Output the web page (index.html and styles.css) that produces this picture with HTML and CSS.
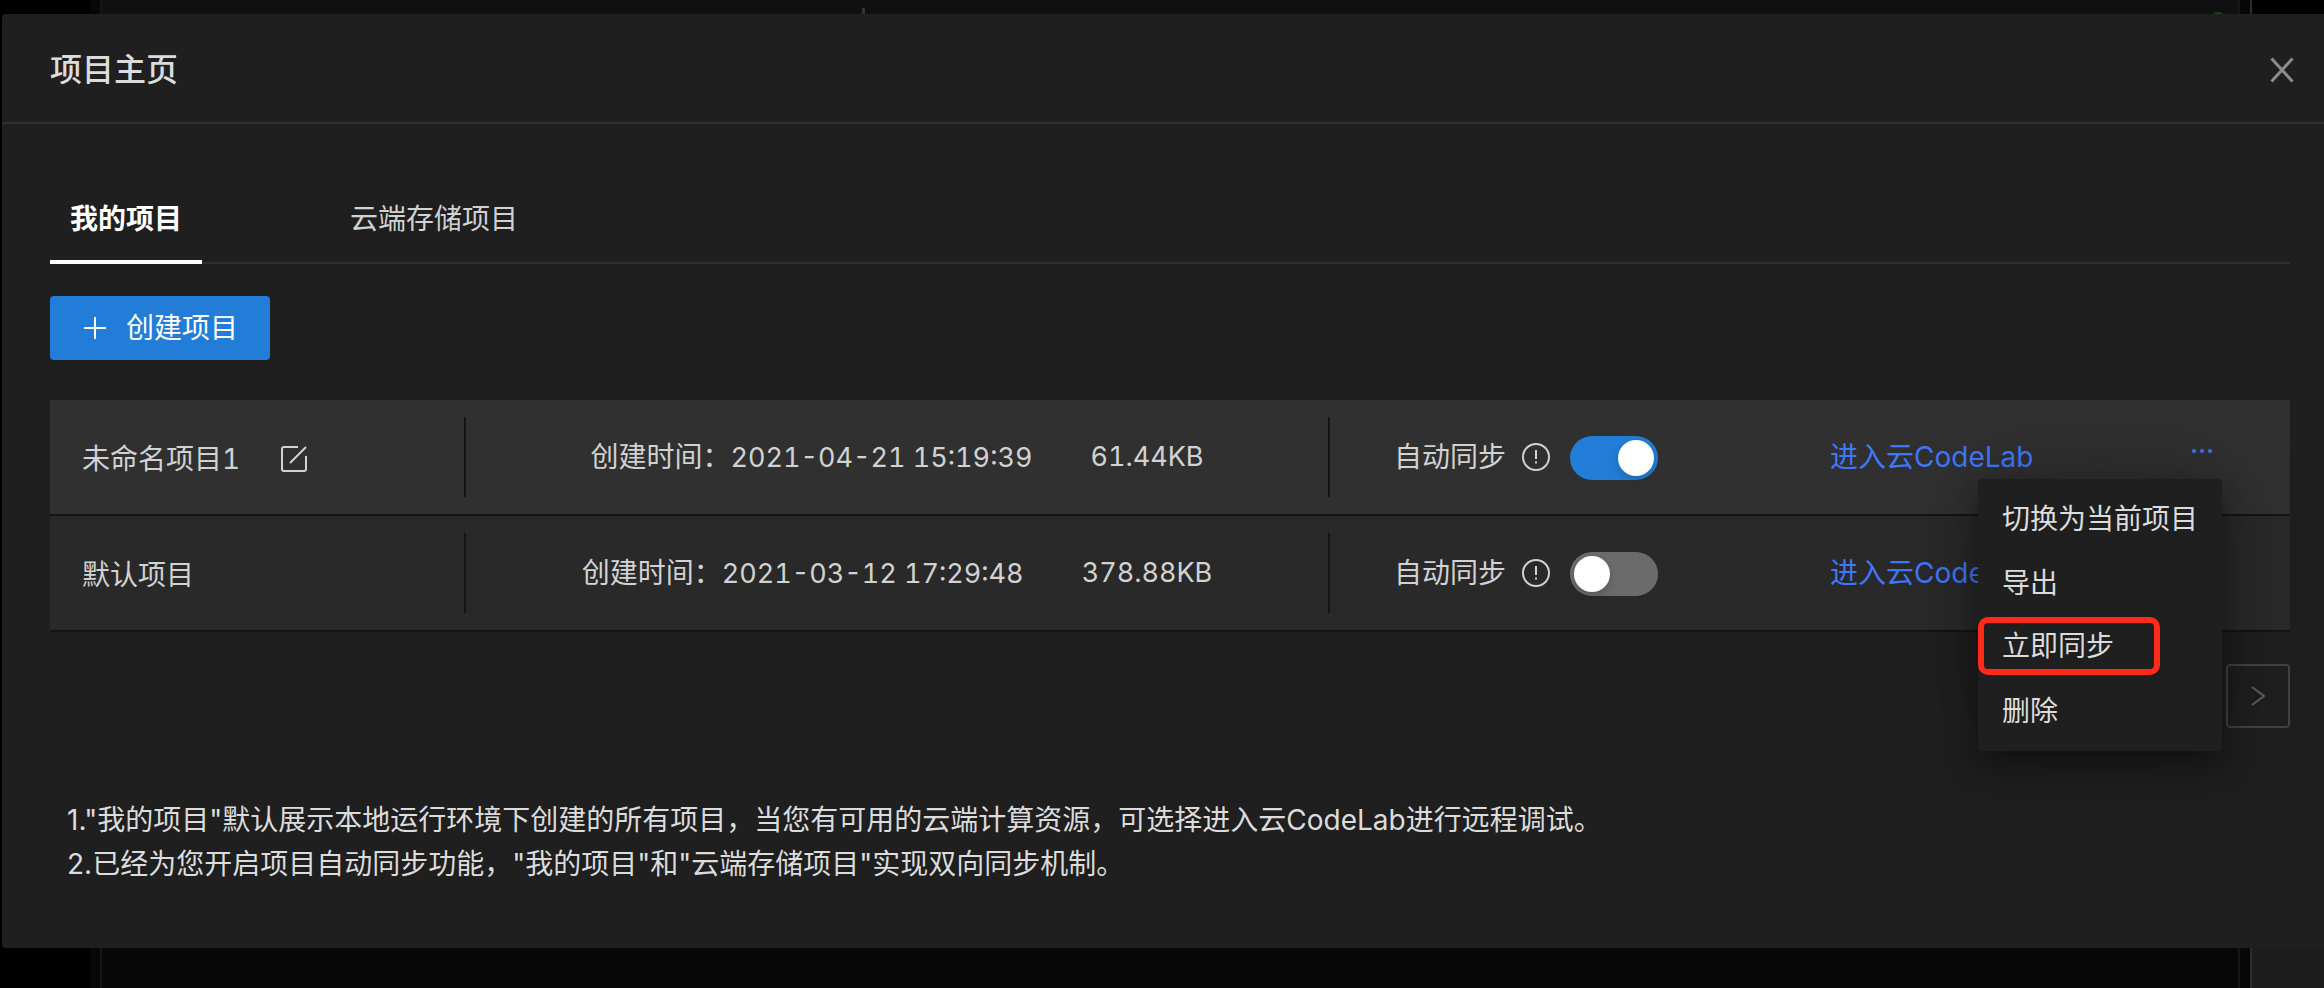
FILE: index.html
```html
<!DOCTYPE html>
<html lang="zh-CN">
<head>
  <meta charset="UTF-8" />
  <meta name="viewport" content="width=device-width, initial-scale=1.0" />
  <title>项目主页</title>
  <link rel="stylesheet" href="styles.css">
</head>
<body>
  <!-- dimmed editor behind the dialog -->
  <div class="backdrop" aria-hidden="true">
    <div class="side"></div>
    <div class="gutter"></div>
    <div class="editor"><span class="cursor"></span><span class="status"></span></div>
    <div class="gutter"></div>
    <div class="panel"></div>
  </div>

  <main class="modal" role="dialog" aria-labelledby="title">
    <header class="modal-header">
      <h1 id="title">项目主页</h1>
      <button class="close" aria-label="关闭">
        <svg width="24" height="26" viewBox="0 0 24 26"><path d="M1.500 1.500L22.500 24.500M22.500 1.500L1.500 24.500"/></svg>
      </button>
    </header>

    <div class="modal-body">
      <nav class="tabs">
        <a href="#mine" class="tab active">我的项目</a>
        <a href="#cloud" class="tab">云端存储项目</a>
      </nav>

      <button class="create">
        <svg width="22" height="22" viewBox="0 0 22 22"><path d="M11 0V22M0 11H22"/></svg>
        创建项目
      </button>

      <div class="list">
        <div class="row current">
          <div class="name">未命名项目1
            <button class="edit" aria-label="重命名">
              <svg width="28" height="28" viewBox="0 0 28 28"><path d="M18 2H4Q2 2 2 4V24Q2 26 4 26H24Q26 26 26 24V11M26 2L10 18"/></svg>
            </button>
          </div>
          <div class="info"><span>创建时间：<time>2021-04-21 15:19:39</time></span><span class="size">61.44KB</span></div>
          <div class="sync">
            <label for="sync1">自动同步</label>
            <svg class="tip" width="28" height="28" viewBox="0 0 28 28"><circle cx="14" cy="14" r="13"/><path d="M14 7V16M14 18.500V20.500"/></svg>
            <input type="checkbox" class="switch" id="sync1" checked>
          </div>
          <div class="actions">
            <a href="#codelab">进入云CodeLab</a>
            <div class="more">
              <button class="dots" aria-label="更多">
                <svg width="20" height="4" viewBox="0 0 20 4"><circle cx="2" cy="2" r="2"/><circle cx="10" cy="2" r="2"/><circle cx="18" cy="2" r="2"/></svg>
              </button>
              <div class="menu">
                <button>切换为当前项目</button>
                <button>导出</button>
                <button class="marked">立即同步</button>
                <button>删除</button>
              </div>
            </div>
          </div>
        </div>

        <div class="row">
          <div class="name">默认项目</div>
          <div class="info"><span>创建时间：<time>2021-03-12 17:29:48</time></span><span class="size">378.88KB</span></div>
          <div class="sync">
            <label for="sync2">自动同步</label>
            <svg class="tip" width="28" height="28" viewBox="0 0 28 28"><circle cx="14" cy="14" r="13"/><path d="M14 7V16M14 18.500V20.500"/></svg>
            <input type="checkbox" class="switch" id="sync2">
          </div>
          <div class="actions">
            <a href="#codelab">进入云CodeLab</a>
          </div>
        </div>
      </div>

      <div class="pager">
        <button aria-label="下一页">
          <svg width="14" height="20" viewBox="0 0 14 20"><path d="M1 1L13 10L1 19"/></svg>
        </button>
      </div>

      <div class="notes">
        <p>1."我的项目"默认展示本地运行环境下创建的所有项目，当您有可用的云端计算资源，可选择进入云CodeLab进行远程调试。</p>
        <p>2.已经为您开启项目自动同步功能，"我的项目"和"云端存储项目"实现双向同步机制。</p>
      </div>
    </div>
  </main>
</body>
</html>
```
FILE: styles.css
```css
* { box-sizing: border-box; }
body {
  margin: 0;
  min-height: 100vh;
  background: #000;
  color: #d2d2d2;
  font: 28px/44px Inter, "Noto Sans CJK SC", sans-serif;
  overflow-x: hidden;
}
button { padding: 0; border: 0; background: none; color: inherit; font: inherit; cursor: pointer; }
a { color: inherit; text-decoration: none; }
svg { display: block; flex: none; fill: none; stroke: currentColor; stroke-width: 2; }
h1, p { margin: 0; }

/* backdrop */
.backdrop { position: fixed; inset: 0; display: flex; }
.side { width: 90px; }
.gutter { width: 12px; background: #070707; border-right: 2px solid #161616; }
.editor { flex: 1; display: flex; justify-content: space-between; padding: 8px 12px 0 760px; background: linear-gradient(#101010, #070707); border-right: 2px solid #161616; }
.cursor { width: 3px; height: 12px; background: #333; }
.status { width: 16px; height: 16px; margin-top: 4px; border-radius: 50%; background: #0b4d0b; }
.editor + .gutter { border-color: #2c2c2c; }
.panel { width: 72px; background: linear-gradient(#000 50%, #1d1d1d 96%); }

/* dialog */
.modal { position: relative; margin: 14px 0 40px 2px; background: #1f1f1f; border-radius: 4px 0 0 4px; }
.modal-header { display: flex; align-items: center; justify-content: space-between; height: 110px; padding: 4px 30px 0 48px; border-bottom: 2px solid #303030; }
.modal-header h1 { font-size: 32px; font-weight: 500; color: #dcdcdc; }
.close { color: #8c8c8c; }
.close svg { stroke-width: 3; }
.modal-body { padding: 48px 34px 62px 48px; }

.tabs { display: flex; gap: 128px; border-bottom: 2px solid #303030; }
.tab { padding: 25px 20px 19px; margin-bottom: -2px; border-bottom: 4px solid transparent; }
.tab.active { color: #fff; font-weight: 700; border-color: #fff; }

.create { display: flex; align-items: center; gap: 20px; height: 64px; margin: 32px 0 40px; padding: 0 32px 0 34px; border-radius: 4px; background: #217dd8; color: #fff; }

.row { display: grid; grid-template-columns: 416px 864px 1fr 460px; align-items: center; height: 116px; background: #292929; border-bottom: 2px solid #141414; }
.row.current { background: #303030; }
.name, .info { display: flex; align-items: center; height: 80px; border-right: 2px solid #141414; font-variant-numeric: tabular-nums; }
.name { gap: 40px; padding: 4px 0 0 32px; }
.info { justify-content: center; gap: 58px; }
.info time, .size { font-size: 27px; }
.sync { display: flex; align-items: center; padding-left: 64px; }
.tip { margin: 0 20px 0 16px; }

.switch { appearance: none; display: flex; width: 88px; height: 44px; margin: 2px 0 0; padding: 4px; border-radius: 22px; background: #6b6b6b; cursor: pointer; }
.switch::before { content: ""; width: 36px; height: 36px; border-radius: 50%; background: #fff; box-shadow: 0 4px 8px rgba(0, 35, 11, 0.2); }
.switch:checked { justify-content: flex-end; background: #217dd8; }

.actions { display: flex; align-items: center; justify-content: space-between; padding-right: 78px; color: #3f77fb; }
.more { position: relative; }
.dots { display: block; padding: 8px 0 20px; }
.dots svg { fill: currentColor; stroke: none; }

.menu { position: absolute; top: 38px; right: -10px; z-index: 2; width: 244px; padding: 8px 0; border-radius: 4px; background: #1f1f1f; color: #dcdcdc; box-shadow: 0 12px 32px rgba(0, 0, 0, 0.4), 0 0 96px rgba(0, 0, 0, 0.2); }
.menu button { display: block; width: 100%; height: 64px; padding: 0 24px; text-align: left; white-space: nowrap; }
.menu .marked { width: 182px; height: 58px; margin: 2px 0 4px; padding: 0 18px; border: 6px solid #ff2a1a; border-radius: 10px; line-height: 46px; }

.pager { display: flex; justify-content: flex-end; margin-top: 32px; }
.pager button { display: grid; place-items: center; width: 64px; height: 64px; border: 2px solid #434343; border-radius: 4px; color: #5f5f5f; }

.notes { margin-top: 70px; padding-left: 17px; color: #dcdcdc; }
```
